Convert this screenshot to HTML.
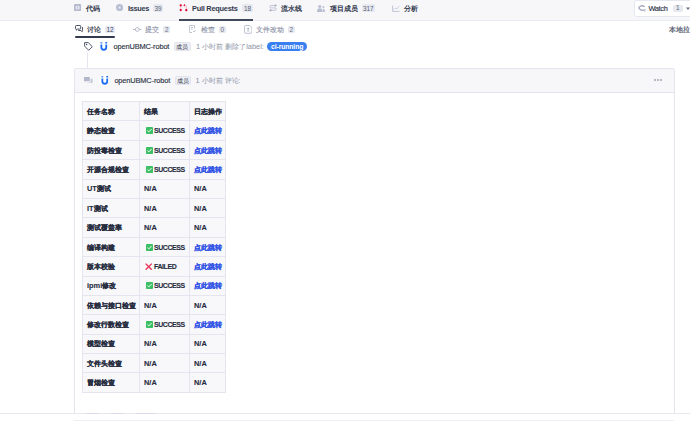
<!DOCTYPE html>
<html><head><meta charset="utf-8">
<style>
*{box-sizing:border-box;margin:0;padding:0}
html,body{width:690px;height:421px;overflow:hidden;background:#fff}
body{position:relative;font-family:"Liberation Sans",sans-serif;color:#40485b}
.a{position:absolute;white-space:nowrap}
#nav{position:absolute;left:0;top:0;width:690px;height:21px;background:#f7f7fa;border-bottom:1px solid #ebebf3}
.nt{font-size:7.4px;font-weight:bold;line-height:10px;top:3.6px;color:#333a4d}
.bd{background:#e7e9f1;color:#565c70;font-size:6.4px;line-height:9.4px;height:7.6px;text-align:center;border-radius:1.5px;top:4px}
.tt{font-size:7.4px;line-height:10px;top:24.5px;color:#868c9f;-webkit-text-stroke:0.1px #868c9f}
.tb{background:#e7e9f1;color:#6a7085;font-size:6.4px;line-height:8.4px;height:7.6px;text-align:center;border-radius:1.5px;top:25.8px}
.mb{width:16.6px;height:8.7px;border:1px solid #e2e5ee;background:#eceef4;border-radius:1.5px;font-size:5.8px;line-height:7.4px;text-align:center;color:#2e3446;padding-top:0.9px}
.tbl{position:absolute;left:82px;top:101px;border-collapse:collapse}
.tbl td{border:1px solid #e4e5ef;background:#f8f8fb;height:19.4px;font-size:7.4px;font-weight:bold;color:#262c3d;-webkit-text-stroke:0.1px #262c3d;padding:1.2px 0 0 4px;white-space:nowrap;line-height:10px}
.tbl td.lk{color:#3456e6;-webkit-text-stroke:0.15px #3456e6}
.sx{display:inline-block;font-size:7.9px;letter-spacing:-0.45px;transform:scaleX(.88);transform-origin:0 50%;-webkit-text-stroke:0.12px #262c3d}
.ic{display:inline-block;width:7px;height:7px;vertical-align:-1.2px;margin-left:1.7px;margin-right:1.3px}
</style></head><body>
<div id="nav"></div>
<!-- nav items -->
<svg class="a" style="left:74px;top:4px" width="7.2" height="7.2" viewBox="0 0 7 7"><rect x="0" y="0" width="7" height="7" rx="1.4" fill="#b3b8cd"/><rect x="1.5" y="1.7" width="4" height="3.6" rx="1.2" fill="#e2e5ee"/><path d="M3.5 2.2V4.8" stroke="#b3b8cd" stroke-width="0.6"/></svg>
<span class="a nt" style="left:86px">代码</span>
<svg class="a" style="left:116px;top:4.2px" width="7.2" height="7.2" viewBox="0 0 7 7"><circle cx="3.5" cy="3.5" r="3.5" fill="#b9bdd1"/><rect x="2.6" y="2.6" width="1.8" height="1.8" fill="#f2f3f8"/></svg>
<span class="a nt" style="left:128px;letter-spacing:-0.33px">Issues</span>
<span class="a bd" style="left:152.8px;width:10.4px">39</span>
<svg class="a" style="left:179px;top:4px" width="9" height="8" viewBox="0 0 9 8"><path d="M1.75 1.3V6.1M5.4 1.3H6.4A0.9 0.9 0 0 1 7.3 2.2V6.2" stroke="#f07d96" stroke-width="0.6" fill="none"/><g fill="#e3002b"><circle cx="1.75" cy="1.3" r="1.15"/><circle cx="1.75" cy="6.1" r="1.15"/><circle cx="7.3" cy="6.2" r="1.15"/><path d="M4.2 1.3L5.9 0 5.9 2.6Z"/></g></svg>
<span class="a nt" style="left:192px;letter-spacing:-0.25px">Pull Requests</span>
<span class="a bd" style="left:242.3px;width:10.6px">18</span>
<div class="a" style="left:179.4px;top:19px;width:73.5px;height:2px;background:#40485b"></div>
<svg class="a" style="left:268.5px;top:4px" width="8" height="8" viewBox="0 0 8 8"><path d="M6.5 1.5H2A1.2 1.2 0 0 0 2 3.9H6A1.2 1.2 0 0 1 6 6.3H1.5" stroke="#b3b8cb" stroke-width="0.8" fill="none"/><circle cx="6.5" cy="1.5" r="1.1" fill="#a3a9bf"/><circle cx="1.5" cy="6.3" r="1.1" fill="#a3a9bf"/></svg>
<span class="a nt" style="left:281px">流水线</span>
<svg class="a" style="left:317px;top:4.5px" width="9" height="7" viewBox="0 0 9 7"><g fill="#b9bdd1"><circle cx="2.8" cy="1.6" r="1.5"/><path d="M0 7C0 4 1 3.3 2.8 3.3S5.6 4 5.6 7Z"/><circle cx="6.4" cy="2" r="1"/><path d="M5.8 3.8C7.3 3.6 8 4.5 8 7H6.2C6.2 5.5 6 4.4 5.8 3.8Z"/></g></svg>
<span class="a nt" style="left:330px">项目成员</span>
<span class="a bd" style="left:361.7px;width:13.3px">317</span>
<svg class="a" style="left:391.5px;top:4.5px" width="8" height="7" viewBox="0 0 8 7"><path d="M0.6 0.5V6.4H7.6" stroke="#b3b8cb" stroke-width="0.8" fill="none"/><path d="M1.8 4.6L3.4 2.9 4.6 4.1 7.2 1" stroke="#b9bdd1" stroke-width="0.7" fill="none"/></svg>
<span class="a nt" style="left:404px">分析</span>
<!-- watch -->
<div class="a" style="left:634px;top:0px;width:70px;height:16.6px;background:#fff;border:1px solid #e5e7ee;border-radius:2.5px"></div>
<svg class="a" style="left:638px;top:5px" width="8" height="7" viewBox="0 0 8 7"><path d="M6.6 1.9C5.4 0.4 2.8 0.2 1.2 2.1L0.7 2.8 1.2 3.5C2.6 5.3 4.6 5.6 5.8 4.9" stroke="#a4a9bf" stroke-width="1.3" fill="none"/><rect x="6.2" y="3.9" width="1.2" height="2.8" fill="#b3b8cb"/></svg>
<span class="a nt" style="left:648.4px;top:4px;font-weight:normal;color:#333a4d;letter-spacing:-0.3px;-webkit-text-stroke:0.18px #333a4d">Watch</span>
<span class="a bd" style="left:672.7px;width:10.3px;top:5px;height:6.8px;line-height:6.8px">1</span>
<svg class="a" style="left:686px;top:7px" width="5" height="4" viewBox="0 0 5 4"><path d="M0 0.5H4L2 3Z" fill="#6b7188"/></svg>

<!-- tabs -->
<svg class="a" style="left:74.5px;top:25.3px" width="8.5" height="7.5" viewBox="0 0 8.5 7.5"><path d="M1.2 0.5H4.9A0.8 0.8 0 0 1 5.7 1.3V3.3A0.8 0.8 0 0 1 4.9 4.1H2.6L1.3 5.2V4.1A0.8 0.8 0 0 1 0.5 3.3V1.3A0.8 0.8 0 0 1 1.2 0.5Z" stroke="#40485b" stroke-width="0.95" fill="none" stroke-linejoin="round"/><path d="M7.6 2.4V5.5L7.2 6.7 5.9 5.5H3.6" stroke="#40485b" stroke-width="0.95" fill="none" stroke-linejoin="round" stroke-linecap="round"/></svg>
<span class="a tt" style="left:87px;color:#2e3446;-webkit-text-stroke:0.2px #2e3446">讨论</span>
<span class="a tb" style="left:105px;width:10px;color:#40485b;background:#e6e9f2">12</span>
<div class="a" style="left:74.8px;top:35.8px;width:40.2px;height:2px;background:#343a4d;border-radius:1px"></div>

<svg class="a" style="left:133px;top:25.5px" width="8.5" height="7" viewBox="0 0 8.5 7"><path d="M0 3.5H2.3M6.2 3.5H8.5" stroke="#9aa0b3" stroke-width="0.7"/><circle cx="4.25" cy="3.5" r="1.9" stroke="#9aa0b3" stroke-width="0.7" fill="none"/></svg>
<span class="a tt" style="left:145.3px">提交</span>
<span class="a tb" style="left:163.3px;width:7.2px">2</span>

<svg class="a" style="left:189px;top:25px" width="7" height="8" viewBox="0 0 7 8"><path d="M4.5 0.5H1A0.6 0.6 0 0 0 0.4 1.1V6.9A0.6 0.6 0 0 0 1 7.5H3M5.5 3.5V1.1A0.6 0.6 0 0 0 4.9 0.5" stroke="#a3a9bc" stroke-width="0.7" fill="none"/><path d="M2 2.5H4M2 4H3.5M4.2 6.2L5 7 6.6 5.2" stroke="#a3a9bc" stroke-width="0.7" fill="none"/></svg>
<span class="a tt" style="left:200.5px">检查</span>
<span class="a tb" style="left:219px;width:6.6px">0</span>

<svg class="a" style="left:244px;top:25px" width="8.4" height="8.8" viewBox="0 0 8.4 8.8"><path d="M1.8 0.5H5.6L7.9 2.8V7A1.3 1.3 0 0 1 6.6 8.3H1.8A1.3 1.3 0 0 1 0.5 7V1.8A1.3 1.3 0 0 1 1.8 0.5Z" stroke="#a8adc0" stroke-width="0.75" fill="none"/><path d="M4.2 2.6V4.8M3.1 3.7H5.3M3.1 6H5.3" stroke="#9aa0b4" stroke-width="0.75" fill="none"/></svg>
<span class="a tt" style="left:256px">文件改动</span>
<span class="a tb" style="left:288px;width:6.8px">2</span>

<span class="a tt" style="left:669px;color:#40485b;top:25.2px;-webkit-text-stroke:0.15px #40485b">本地拉取</span>

<!-- timeline event -->
<svg class="a" style="left:83.5px;top:41.8px" width="9" height="9" viewBox="0 0 9 9"><path d="M0.6 0.6H4.2L8.3 4.7 4.7 8.3 0.6 4.2Z" stroke="#4a5063" stroke-width="0.95" fill="none" stroke-linejoin="round"/><circle cx="2.6" cy="2.6" r="0.75" fill="#4a5063"/></svg>
<div class="a" style="left:87px;top:52.5px;width:1px;height:16px;background:#e4e5ef"></div>
<svg class="a" style="left:99.9px;top:42.1px" width="8" height="8.5" viewBox="0 0 8 8.5"><path d="M1.35 2.6V5.3A2.45 2.45 0 0 0 6.25 5.3V2.6" stroke="#1a6cf5" stroke-width="1.8" fill="none"/><rect x="0.3" y="0" width="2.1" height="1.5" rx="0.5" fill="#5b95f5"/><rect x="5.2" y="0" width="2" height="1.5" rx="0.5" fill="#1a6cf5"/></svg>
<span class="a" style="left:113.6px;top:41.5px;font-size:7.4px;line-height:10px;color:#2e3446;letter-spacing:-0.13px;-webkit-text-stroke:0.15px #2e3446">openUBMC-robot</span>
<span class="a mb" style="left:174px;top:41.9px">成员</span>
<span class="a" style="left:196px;top:41.5px;font-size:7.4px;line-height:10px;color:#8c92a4">1 小时前 删除了label:</span>
<span class="a" style="left:266.9px;top:42.4px;width:40.5px;height:8.7px;border-radius:4.4px;background:#3a7ff1;color:#fff;font-weight:bold;font-size:6.8px;line-height:10.2px;text-align:center;letter-spacing:-0.1px">ci-running</span>

<!-- comment box -->
<div class="a" style="left:74px;top:68px;width:601px;height:360px;border:1px solid #e4e5ef;border-radius:2px;background:#fff"></div>
<div class="a" style="left:75px;top:69px;width:599px;height:24px;background:#f7f7fa;border-bottom:1px solid #e4e5ef;border-radius:1.5px 1.5px 0 0"></div>
<svg class="a" style="left:83.6px;top:77px" width="9" height="7.5" viewBox="0 0 9 7.5"><path d="M0 0H5.8V4H2.2L0.8 5.3V4H0Z" fill="#b3b7c9"/><path d="M6.6 1.8H8.6V5.4H8V6.4L6.8 5.4H3.2V4.8H6.6Z" fill="#c3c7d6"/></svg>
<div class="a" style="left:98.6px;top:75px;width:10.8px;height:10.8px;border-radius:50%;background:#fff"></div>
<svg class="a" style="left:100.6px;top:76.1px" width="8" height="8.5" viewBox="0 0 8 8.5"><path d="M1.35 2.6V5.3A2.45 2.45 0 0 0 6.25 5.3V2.6" stroke="#1a6cf5" stroke-width="1.8" fill="none"/><rect x="0.3" y="0" width="2.1" height="1.5" rx="0.5" fill="#5b95f5"/><rect x="5.2" y="0" width="2" height="1.5" rx="0.5" fill="#1a6cf5"/></svg>
<span class="a" style="left:114.4px;top:76.3px;font-size:7.4px;line-height:10px;color:#2e3446;letter-spacing:-0.13px;-webkit-text-stroke:0.15px #2e3446">openUBMC-robot</span>
<span class="a mb" style="left:174.9px;top:76.2px">成员</span>
<span class="a" style="left:195.4px;top:76.3px;font-size:7.4px;line-height:10px;color:#8c92a4">1 小时前 评论:</span>
<svg class="a" style="left:653.5px;top:79px" width="8" height="2" viewBox="0 0 8 2"><circle cx="1" cy="1" r="0.75" fill="#555b6e"/><circle cx="4" cy="1" r="0.75" fill="#555b6e"/><circle cx="7" cy="1" r="0.75" fill="#555b6e"/></svg>

<!-- table -->
<table class="tbl">
<colgroup><col style="width:57px"><col style="width:49.6px"><col style="width:36px"></colgroup>
<tr><td>任务名称</td><td>结果</td><td>日志操作</td></tr>
<tr><td>静态检查</td><td><svg class="ic" viewBox="0 0 7 7"><rect width="7" height="7" rx="0.8" fill="#3dbf66"/><path d="M1.5 3.7L2.8 4.9 5.5 2.1" stroke="#fff" stroke-width="1" fill="none"/></svg><span class="sx">SUCCESS</span></td><td class="lk">点此跳转</td></tr>
<tr><td>防投毒检查</td><td><svg class="ic" viewBox="0 0 7 7"><rect width="7" height="7" rx="0.8" fill="#3dbf66"/><path d="M1.5 3.7L2.8 4.9 5.5 2.1" stroke="#fff" stroke-width="1" fill="none"/></svg><span class="sx">SUCCESS</span></td><td class="lk">点此跳转</td></tr>
<tr><td>开源合规检查</td><td><svg class="ic" viewBox="0 0 7 7"><rect width="7" height="7" rx="0.8" fill="#3dbf66"/><path d="M1.5 3.7L2.8 4.9 5.5 2.1" stroke="#fff" stroke-width="1" fill="none"/></svg><span class="sx">SUCCESS</span></td><td class="lk">点此跳转</td></tr>
<tr><td>UT测试</td><td>N/A</td><td>N/A</td></tr>
<tr><td>IT测试</td><td>N/A</td><td>N/A</td></tr>
<tr><td>测试覆盖率</td><td>N/A</td><td>N/A</td></tr>
<tr><td>编译构建</td><td><svg class="ic" viewBox="0 0 7 7"><rect width="7" height="7" rx="0.8" fill="#3dbf66"/><path d="M1.5 3.7L2.8 4.9 5.5 2.1" stroke="#fff" stroke-width="1" fill="none"/></svg><span class="sx">SUCCESS</span></td><td class="lk">点此跳转</td></tr>
<tr><td>版本校验</td><td><svg class="ic" style="margin-left:1.2px;width:7.4px;height:7.4px;vertical-align:-1.5px" viewBox="0 0 7 7"><path d="M0.6 0.6L6.4 6.4M6.4 0.6L0.6 6.4" stroke="#e82e55" stroke-width="1.3"/></svg><span class="sx">FAILED</span></td><td class="lk">点此跳转</td></tr>
<tr><td>ipmi修改</td><td><svg class="ic" viewBox="0 0 7 7"><rect width="7" height="7" rx="0.8" fill="#3dbf66"/><path d="M1.5 3.7L2.8 4.9 5.5 2.1" stroke="#fff" stroke-width="1" fill="none"/></svg><span class="sx">SUCCESS</span></td><td class="lk">点此跳转</td></tr>
<tr><td>依赖与接口检查</td><td>N/A</td><td>N/A</td></tr>
<tr><td>修改行数检查</td><td><svg class="ic" viewBox="0 0 7 7"><rect width="7" height="7" rx="0.8" fill="#3dbf66"/><path d="M1.5 3.7L2.8 4.9 5.5 2.1" stroke="#fff" stroke-width="1" fill="none"/></svg><span class="sx">SUCCESS</span></td><td class="lk">点此跳转</td></tr>
<tr><td>模型检查</td><td>N/A</td><td>N/A</td></tr>
<tr><td>文件头检查</td><td>N/A</td><td>N/A</td></tr>
<tr><td>冒烟检查</td><td>N/A</td><td>N/A</td></tr>
</table>

<!-- bottom -->
<div class="a" style="left:0;top:413px;width:690px;height:8px;background:#fff;border-top:1px solid #e7e8ee"></div>
<div class="a" style="left:86px;top:413px;width:13px;height:1px;background:#d9dce8"></div>
<div class="a" style="left:111px;top:413px;width:13px;height:1px;background:#d9dce8"></div>
<div class="a" style="left:136px;top:413px;width:20px;height:1px;background:#d9dce8"></div>
<div class="a" style="left:74px;top:420px;width:600px;height:1px;background:#eceef3"></div>
</body></html>
